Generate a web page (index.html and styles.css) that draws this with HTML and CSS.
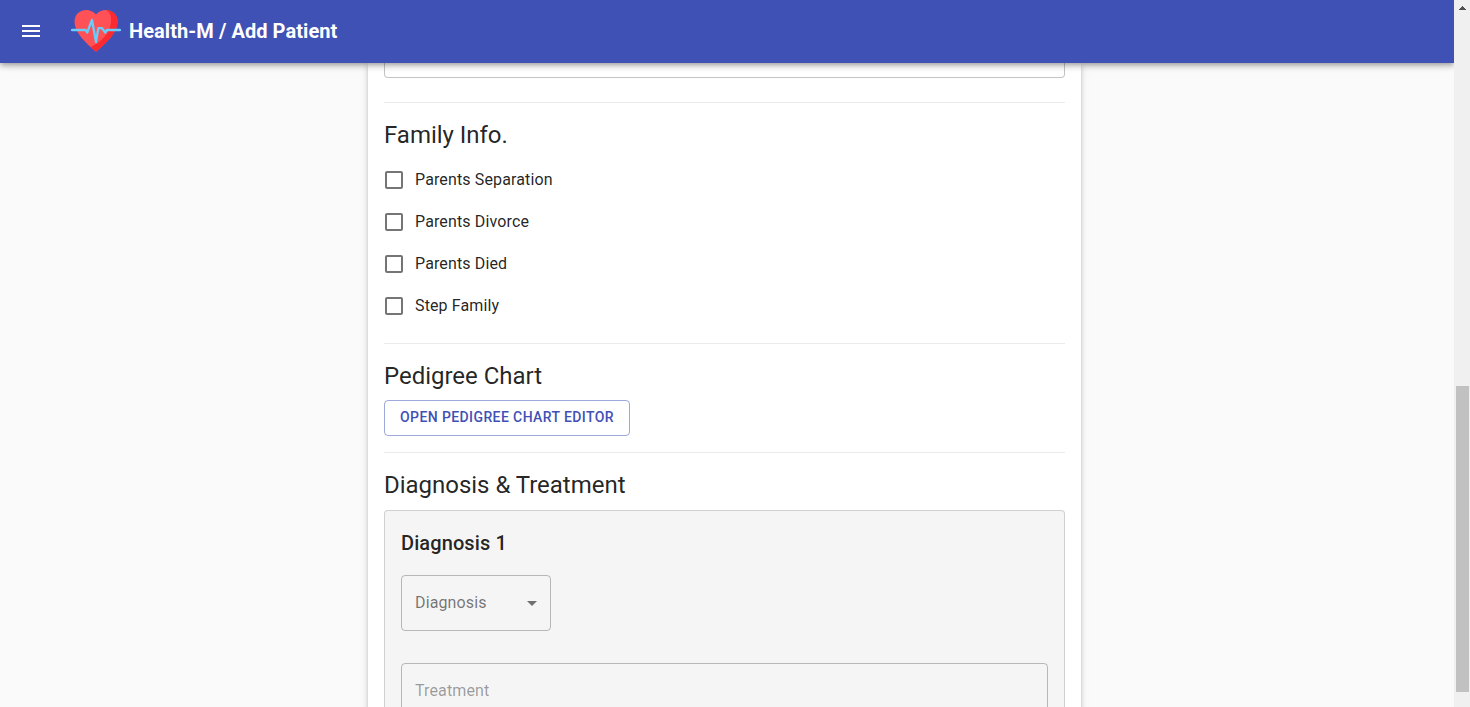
FILE: index.html
```html
<!DOCTYPE html>
<html lang="en">
<head>
<meta charset="utf-8">
<title>Health-M / Add Patient</title>
<link rel="stylesheet" href="styles.css">
</head>
<body>
<div class="page">
  <div class="app">
    <header class="app-bar">
      <svg class="menu-icon" width="24" height="24" viewBox="0 0 24 24"><path d="M3 18h18v-2H3v2zm0-5h18v-2H3v2zm0-7v2h18V6H3z"/></svg>
      <svg class="logo" width="50" height="50" viewBox="0 0 50 50">
        <path fill="#ff5156" d="M25 9.600C22.500 6.500 19 5 15 5 8.500 5 3.500 10 3.500 16.500 3.500 28 15 38 25 46.700 35 38 46.600 28 46.600 16.500 46.600 10 41.500 5 35 5c-4 0-7.500 1.500-10 4.600z"/>
        <path fill="#fa2a30" d="M35 5C38.500 6.500 40.500 11 40 17 39 29 29.500 37.500 19.500 42L25 46.700C35 38 46.600 28 46.600 16.500 46.600 10 41.500 5 35 5z"/>
        <path fill="none" stroke="#6bcdfa" stroke-width="2.300" stroke-linecap="round" stroke-linejoin="round" d="M1 25H14.700L16.200 27.500 21 15 25 37 27.300 23.200H31L34.300 27.500 36 25H49"/>
      </svg>
      <span class="title">Health-M / Add Patient</span>
    </header>
    <main class="content">
      <section class="card">
        <div class="field-end"></div>
        <hr class="divider">
        <h2 class="heading">Family Info.</h2>
        <div class="options">
          <label class="option"><svg class="box" width="24" height="24" viewBox="0 0 24 24"><path d="M19 5v14H5V5h14m0-2H5c-1.100 0-2 .9-2 2v14c0 1.100.9 2 2 2h14c1.100 0 2-.9 2-2V5c0-1.100-.9-2-2-2z"/></svg><span>Parents Separation</span></label>
          <label class="option"><svg class="box" width="24" height="24" viewBox="0 0 24 24"><path d="M19 5v14H5V5h14m0-2H5c-1.100 0-2 .9-2 2v14c0 1.100.9 2 2 2h14c1.100 0 2-.9 2-2V5c0-1.100-.9-2-2-2z"/></svg><span>Parents Divorce</span></label>
          <label class="option"><svg class="box" width="24" height="24" viewBox="0 0 24 24"><path d="M19 5v14H5V5h14m0-2H5c-1.100 0-2 .9-2 2v14c0 1.100.9 2 2 2h14c1.100 0 2-.9 2-2V5c0-1.100-.9-2-2-2z"/></svg><span>Parents Died</span></label>
          <label class="option"><svg class="box" width="24" height="24" viewBox="0 0 24 24"><path d="M19 5v14H5V5h14m0-2H5c-1.100 0-2 .9-2 2v14c0 1.100.9 2 2 2h14c1.100 0 2-.9 2-2V5c0-1.100-.9-2-2-2z"/></svg><span>Step Family</span></label>
        </div>
        <hr class="divider">
        <h2 class="heading">Pedigree Chart</h2>
        <button class="button">OPEN PEDIGREE CHART EDITOR</button>
        <hr class="divider">
        <h2 class="heading">Diagnosis &amp; Treatment</h2>
        <div class="panel">
          <h3 class="subheading">Diagnosis 1</h3>
          <div class="select"><span>Diagnosis</span><svg class="arrow" width="24" height="24" viewBox="0 0 24 24"><path d="M7 10l5 5 5-5z"/></svg></div>
          <div class="textarea">Treatment</div>
        </div>
      </section>
    </main>
  </div>
  <div class="scrollbar">
    <svg class="scroll-up" width="16" height="16" viewBox="0 0 16 16" shape-rendering="crispEdges"><path d="M8 6h1v1h1v1h1v1h1v1H5V9h1V8h1V7h1z"/></svg>
    <div class="thumb"></div>
  </div>
</div>
</body>
</html>
```
FILE: styles.css
```css
* { box-sizing: border-box; }

body {
  margin: 0;
  overflow: hidden;
  background: #fafafa;
  color: rgba(0, 0, 0, 0.87);
  font-family: Roboto, "Liberation Sans", sans-serif;
  font-size: 16px;
}

.page { display: flex; height: 707px; overflow: hidden; }

.app { flex: 1; display: flex; flex-direction: column; overflow: hidden; }

.app-bar {
  position: relative;
  z-index: 1;
  flex: none;
  display: flex;
  align-items: center;
  height: 63px;
  padding: 0 19px 1px;
  background: #3f51b5;
  color: #fff;
  box-shadow: 0 2px 4px -1px rgba(0, 0, 0, 0.2), 0 4px 5px rgba(0, 0, 0, 0.14), 0 1px 10px rgba(0, 0, 0, 0.12);
}

.menu-icon { fill: #fff; margin-right: 28px; }
.logo { margin: 0 8px 2px 0; }
.title { font-size: 20px; font-weight: 700; line-height: 32px; letter-spacing: 0.07px; }

.content { flex: 1; min-height: 0; padding-left: 368px; }

.card {
  width: 713px;
  height: 700px;
  padding: 0 16px;
  background: #fff;
  box-shadow: 0 3px 3px -2px rgba(0, 0, 0, 0.2), 0 3px 4px rgba(0, 0, 0, 0.14), 0 1px 8px rgba(0, 0, 0, 0.12);
}

.field-end {
  height: 15px;
  margin-bottom: 24px;
  border: 1px solid rgba(0, 0, 0, 0.23);
  border-top: 0;
  border-radius: 0 0 4px 4px;
}

.divider { height: 1px; margin: 16px 0; border: 0; background: rgba(0, 0, 0, 0.08); }

.heading { margin: 0 0 8px; font-size: 24px; font-weight: 400; line-height: 32px; letter-spacing: -0.02px; }

.option {
  display: flex;
  align-items: center;
  height: 42px;
  margin-left: -2px;
  gap: 9px;
  line-height: 24px;
  letter-spacing: 0.13px;
}
.option span { margin-top: -1px; }
.box { fill: rgba(0, 0, 0, 0.54); }

.button {
  display: block;
  height: 36px;
  padding: 0 15px 2px;
  border: 1px solid rgba(63, 81, 181, 0.5);
  border-radius: 4px;
  background: transparent;
  color: #3f51b5;
  font: 500 14px/24px Roboto, "Liberation Sans", sans-serif;
  letter-spacing: 0.4px;
}

.panel {
  height: 300px;
  margin-top: 9px;
  padding: 16px;
  border: 1px solid rgba(0, 0, 0, 0.15);
  border-radius: 4px;
  background: #f5f5f5;
}

.subheading { margin: 0 0 16px; font-size: 20px; font-weight: 500; line-height: 32px; letter-spacing: 0.1px; }

.select, .textarea {
  border: 1px solid rgba(0, 0, 0, 0.25);
  border-radius: 4px;
  letter-spacing: 0.13px;
}
.select {
  display: flex;
  align-items: center;
  justify-content: space-between;
  width: 150px;
  height: 56px;
  padding: 0 6px 0 13px;
  color: rgba(0, 0, 0, 0.54);
}
.select span { margin-bottom: 2px; }
.arrow { fill: rgba(0, 0, 0, 0.54); }
.textarea {
  height: 94px;
  margin-top: 32px;
  padding: 17px 13px;
  line-height: 19px;
  color: rgba(0, 0, 0, 0.38);
}

.scrollbar { width: 16px; background: #f0f0f0; }
.scroll-up { display: block; fill: #505050; }
.thumb { width: 13px; height: 306px; margin: 370px 0 0 2px; background: #c1c1c1; }
```
